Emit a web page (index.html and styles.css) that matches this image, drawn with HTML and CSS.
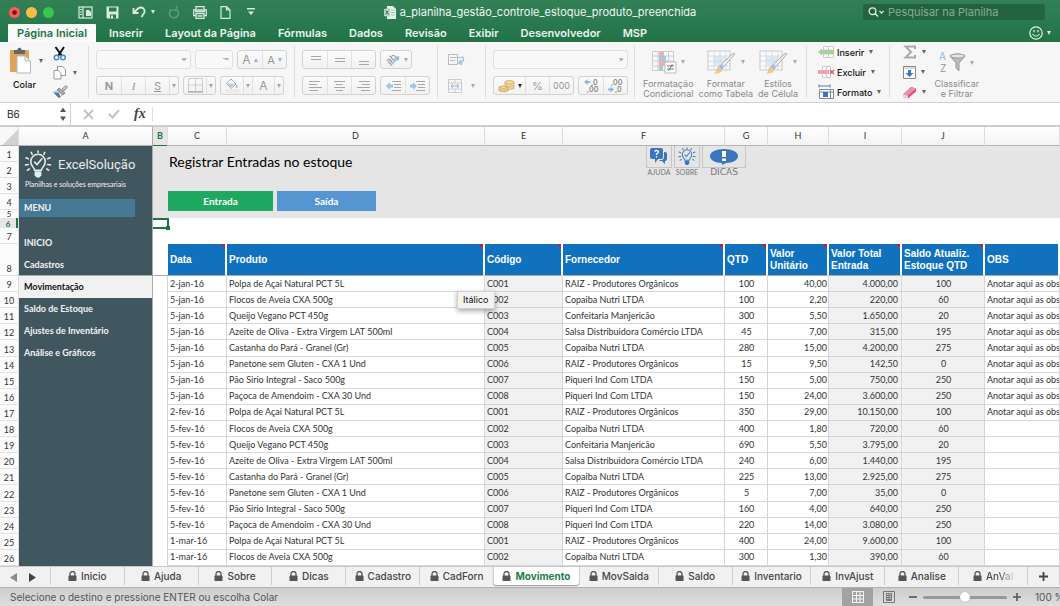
FILE: index.html
```html
<!DOCTYPE html>
<html lang="pt-BR">
<head>
    <meta charset="UTF-8">
    <meta name="viewport" content="width=device-width, initial-scale=1.0">
    <title>a_planilha_gestão_controle_estoque_produto_preenchida</title>
    <link rel="stylesheet" href="styles.css">
</head>
<body>
    <!-- Shared icons -->
    <svg class="sprite" aria-hidden="true">
        <symbol id="lock" viewBox="0 0 9 10"><path d="M2 5V3a2.5 2.5 0 0 1 5 0v2" fill="none" stroke="#555" stroke-width="1.3"/><rect x="0.5" y="4.5" width="8" height="5.5" rx="0.6" fill="#555"/></symbol>
        <symbol id="bulb" viewBox="0 0 28 30"><g fill="none" stroke="currentColor" stroke-width="1.6" stroke-linecap="round"><path d="M10.5 21c0-3-4-4-4-9a7.5 7.5 0 0 1 15 0c0 5-4 6-4 9z"/><path d="M10.5 12.5l2.5 2.5 5-6"/><path d="M14 1v1.500M7 2.500l1 2M21 2.500l-1 2M1.500 8l2.500 1M26.500 8L24 9M1 15.500l3-.5M27 15.500l-3-.5M3 21l2-1.500M25 21l-2-1.500"/></g><path d="M10.5 22h7v4l-2 2.500h-3l-2-2.500z" fill="currentColor"/></symbol>
        <symbol id="brush" viewBox="0 0 30 26"><rect x="1" y="2" width="22" height="19" fill="#fafafa" stroke="#c8c8c8"/><path d="M1 7h22M1 12h22M1 17h22M7 2v19M13 2v19M19 2v19" stroke="#d5dce3"/><path d="M7 7h12v10H7z" fill="#cfe0ef" opacity=".7"/><path d="M27.5 5.5L17 17.5l-2.500-2.500L26 4.500q2-.5 1.500 1z" fill="#f2f2f2" stroke="#aaa"/><path d="M14 15.500l3 3-2 2.500-4-3z" fill="#9dbbe0"/><path d="M11.5 17.5l4 3.500q-2 4-8.500 3.500 2.500-1.500 2-3.500.5-2.500 2.500-3.500z" fill="#edc68f"/></symbol>
    </svg>

    <div class="window">
        <!-- Title Bar -->
        <div class="titlebar">
            <div class="titlebar-left">
                <div class="lights">
                    <button class="light red" aria-label="Fechar"></button>
                    <button class="light yellow" aria-label="Minimizar"></button>
                    <button class="light green" aria-label="Ampliar"></button>
                </div>
                <div class="quick">
                    <button aria-label="Galeria"><svg width="15" height="13" viewBox="0 0 15 13" fill="none" stroke="#d9eadf" stroke-width="1.2"><rect x="1" y="1" width="13" height="11"/><path d="M5 1v11M2 3.500h2M2 6h2M2 8.500h2"/><path d="M8 4h3l2 2v4H8z" fill="#d9eadf" stroke="none"/></svg></button>
                    <button aria-label="Salvar"><svg width="13" height="13" viewBox="0 0 13 13"><path d="M.5.5h12v12H1.500l-1-1z" fill="#d9eadf"/><path d="M3 1.500h7.500v4H3zM4 8.500h6v4H4z" fill="#2c7a50"/><path d="M5 9.500h2v3H5z" fill="#d9eadf"/></svg></button>
                    <button class="with-arrow" aria-label="Desfazer"><svg width="14" height="12" viewBox="0 0 14 12" fill="none" stroke="#d9eadf" stroke-width="1.8"><path d="M1.500 2v5h5M2 6.500l4-4q3-2 5.500 0 2.500 3-.5 6L9.500 11"/></svg><i class="arrow light-arrow"></i></button>
                    <button aria-label="Refazer"><svg width="12" height="13" viewBox="0 0 12 13" fill="none" stroke="#629c7b" stroke-width="1.5"><path d="M8 3.300A4.500 4.500 0 1 1 3.500 3.500M8.500 0v4H4.500"/></svg></button>
                    <button aria-label="Imprimir"><svg width="14" height="13" viewBox="0 0 14 13" fill="none" stroke="#d9eadf" stroke-width="1.3"><path d="M3 4V.7h8V4M3 9.500H.7V4h12.600v5.500H11"/><path d="M3 7.500h8v5H3zM4.500 10h5"/><path d="M2 5.500h10"/></svg></button>
                    <button aria-label="Novo"><svg width="11" height="13" viewBox="0 0 11 13" fill="none" stroke="#d9eadf" stroke-width="1.2"><path d="M1 .7h5.500L10 4v8.300H1zM6.500.7V4H10"/></svg></button>
                    <button class="customize" aria-label="Personalizar"><svg width="8" height="8" viewBox="0 0 8 8" fill="#d9eadf"><path d="M0 0h8v1.500H0zM1 3.500h6L4 7z"/></svg></button>
                </div>
            </div>
            <div class="doc-title">
                <svg width="12" height="13" viewBox="0 0 12 13"><path d="M3 0h6l3 3v10H3z" fill="#e8f2ec"/><path d="M0 3l6-1v9l-6-1z" fill="#b9d6c5"/><path d="M1.500 4.500l3 4M4.500 4.500l-3 4" stroke="#2c7a50"/><path d="M7 4h4M7 6.500h4M7 9h4" stroke="#9dc5ae"/></svg>
                <span>a_planilha_gestão_controle_estoque_produto_preenchida</span>
            </div>
            <div class="titlebar-right">
                <label class="search">
                    <svg width="16" height="10" viewBox="0 0 16 10" fill="none" stroke="#e4efe8" stroke-width="1.3"><circle cx="4.5" cy="4.2" r="3.4"/><path d="M7 6.500l3 3M11.500 4l2 2 2-2"/></svg>
                    <input type="search" placeholder="Pesquisar na Planilha" aria-label="Pesquisar na Planilha">
                </label>
            </div>
        </div>

        <!-- Ribbon Tabs -->
        <div class="ribbon-tabs">
            <button class="active">Página Inicial</button>
            <button>Inserir</button>
            <button>Layout da Página</button>
            <button>Fórmulas</button>
            <button>Dados</button>
            <button>Revisão</button>
            <button>Exibir</button>
            <button>Desenvolvedor</button>
            <button>MSP</button>
            <button class="smile" aria-label="Comentários"><svg width="14" height="14" viewBox="0 0 14 14" fill="none" stroke="#e4efe8" stroke-width="1.2"><circle cx="7" cy="7" r="6.2"/><path d="M3.500 8q3.500 4.500 7 0M5 4v2.200M9 4v2.200"/></svg><i class="arrow light-arrow"></i></button>
        </div>

        <!-- Ribbon -->
        <div class="ribbon">
            <div class="group paste-group">
                <button class="paste">
                    <span class="icon-line"><svg width="21" height="27" viewBox="0 0 21 27"><rect x="0" y="3" width="19" height="22" rx="1" fill="#daa45c"/><path d="M4 3h3q2.500-5 5 0h3v4H4z" fill="#666"/><path d="M7 9h8l5.500 5v12H7z" fill="#fff" stroke="#b5b5b5"/><path d="M15 9v5h5" fill="#eee" stroke="#b5b5b5"/></svg><i class="arrow"></i></span>
                    <span>Colar</span>
                </button>
                <div class="clip">
                    <button aria-label="Recortar"><svg width="14" height="15" viewBox="0 0 14 15" fill="none"><path d="M2.500 1L9 10M11 1L5 10" stroke="#111" stroke-width="2"/><circle cx="3.5" cy="11.5" r="2.3" stroke="#4187d0" stroke-width="1.4"/><circle cx="10" cy="11.5" r="2.3" stroke="#4187d0" stroke-width="1.4"/></svg></button>
                    <button aria-label="Copiar"><svg width="14" height="14" viewBox="0 0 14 14" fill="#fff" stroke="#999"><path d="M4.500.5h5l3 3v6h-8z"/><path d="M1 4.500h4.500l2.500 3V13H1z"/></svg><i class="arrow"></i></button>
                    <button aria-label="Pincel"><svg width="15" height="13" viewBox="0 0 15 13"><path d="M9 4l4-3.500L14.500 2 11 6z" fill="#ccc" stroke="#777" stroke-width=".8"/><path d="M6 3l6 5-2 2-6-5z" fill="#aaa" stroke="#666" stroke-width=".6"/><path d="M4 5.500l5.500 4.500L6 13 .5 7.500z" fill="#eee" stroke="#888" stroke-width=".5"/><path d="M.5 7.500h5l2 4L6 13z" fill="#3f7fc0"/></svg></button>
                </div>
            </div>

            <div class="group">
                <div class="line">
                    <select class="combo font-name" aria-label="Fonte" disabled></select>
                    <select class="combo font-size" aria-label="Tamanho da fonte" disabled></select>
                    <div class="segment"><button class="w24 big-a" disabled>A<i class="arrow up"></i></button><button class="w24" disabled>A<i class="arrow blue"></i></button></div>
                </div>
                <div class="line">
                    <div class="segment"><button class="w24 bold" disabled>N</button><button class="w24 italic" disabled>I</button><button class="w24 under" disabled>S</button><button class="w9" aria-label="Opções de sublinhado" disabled><i class="arrow"></i></button></div>
                    <div class="segment"><button class="w22" aria-label="Bordas" disabled><svg width="15" height="15" viewBox="0 0 15 15" fill="none" stroke="#ccc"><path d="M.5.5h14v13H.5zM7.500.5v13M.5 7h14"/><path d="M0 14h15" stroke="#999"/></svg></button><button class="w9" aria-label="Opções de borda" disabled><i class="arrow"></i></button></div>
                    <div class="segment"><button class="w22" aria-label="Preenchimento" disabled><svg width="15" height="15" viewBox="0 0 15 15" fill="#fff" stroke="#aaa"><path d="M6 1l5 5-5 4.500-4.500-5z"/><path d="M2 5.500h8l-4 4z" fill="#aecbeb" stroke="none"/><path d="M11.500 6q2 3 .5 4-1.500-1-.5-4z" fill="#8bb7e6" stroke="none"/><path d="M1.500 12h12v2h-12z" stroke="#ddd"/></svg></button><button class="w9" aria-label="Cores de preenchimento" disabled><i class="arrow"></i></button><button class="w22 font-color" disabled>A</button><button class="w9" aria-label="Cores da fonte" disabled><i class="arrow"></i></button></div>
                </div>
            </div>

            <div class="group align-group">
                <div class="line">
                    <div class="segment">
                        <button class="w24" aria-label="Alinhar acima" disabled><svg width="13" height="13" stroke="#a8a8a8"><path d="M2 3.500h10M2 6.500h10"/></svg></button>
                        <button class="w24" aria-label="Alinhar no meio" disabled><svg width="13" height="13" stroke="#a8a8a8"><path d="M2 5.500h10M2 8.500h10"/></svg></button>
                        <button class="w24" aria-label="Alinhar abaixo" disabled><svg width="13" height="13" stroke="#a8a8a8"><path d="M2 8.500h10M2 11.500h10"/></svg></button>
                    </div>
                    <div class="segment"><button class="w30" aria-label="Orientação" disabled><svg width="17" height="17" viewBox="0 0 17 17"><text x="2" y="11" transform="rotate(-42 7 8)" font-size="9" fill="#888">ab</text><path d="M6 15l8-8M11 6.500l3.500-.5-.5 3.500" fill="none" stroke="#8bb7e6" stroke-width="1.3"/></svg><i class="arrow"></i></button></div>
                </div>
                <div class="line">
                    <div class="segment">
                        <button class="w24" aria-label="Alinhar à esquerda" disabled><svg width="13" height="13" stroke="#a8a8a8"><path d="M0 2.500h11M0 5.500h8M0 8.500h13M0 11.500h9"/></svg></button>
                        <button class="w24" aria-label="Centralizar" disabled><svg width="13" height="13" stroke="#a8a8a8"><path d="M1 2.500h11M3 5.500h7M1 8.500h11M3 11.500h7"/></svg></button>
                        <button class="w24" aria-label="Alinhar à direita" disabled><svg width="13" height="13" stroke="#a8a8a8"><path d="M2 2.500h11M5 5.500h8M0 8.500h13M4 11.500h9"/></svg></button>
                    </div>
                    <div class="segment">
                        <button class="w24" aria-label="Diminuir recuo" disabled><svg width="15" height="13" stroke="#a8a8a8"><path d="M6 2.500h9M8 5.500h7M8 8.500h7M6 11.500h9"/><path d="M0 7l4-4v2.500h3v3H4V11z" fill="#9cc3ec" stroke="none"/></svg></button>
                        <button class="w24" aria-label="Aumentar recuo" disabled><svg width="15" height="13" stroke="#a8a8a8"><path d="M6 2.500h9M8 5.500h7M8 8.500h7M6 11.500h9"/><path d="M7 7L3 3v2.500H0v3h3V11z" fill="#9cc3ec" stroke="none"/></svg></button>
                    </div>
                </div>
            </div>

            <div class="group wrap-group">
                <div class="line"><button class="plain" aria-label="Quebrar texto" disabled><svg width="17" height="12" viewBox="0 0 17 12" fill="none" stroke="#bbb"><path d="M.5.5h9v10h-9zM2 3.500h11M2 6.500h5"/><path d="M13.500 2.500q3.500 2 1 5l-3 1.500M13 6l-2 3 3 1.500" stroke="#9cc3ec" stroke-width="1.5"/></svg></button></div>
                <div class="line"><button class="plain" aria-label="Mesclar" disabled><svg width="15" height="14" viewBox="0 0 15 14" fill="none" stroke="#ccc"><path d="M.5.5h13v13H.5zM.5 4h13M.5 10h13M7 .5V4M7 10v3.500"/><path d="M3 7h8M5 5L3 7l2 2M9 5l2 2-2 2" stroke="#8bb7e6"/></svg><i class="arrow pale"></i></button></div>
            </div>

            <div class="group number-group">
                <div class="line"><select class="combo number-format" aria-label="Formato de número" disabled></select></div>
                <div class="line">
                    <div class="segment">
                        <button class="w31" aria-label="Moeda"><svg width="17" height="14" viewBox="0 0 17 14" fill="#f1d8a2" stroke="#cfa963" stroke-width=".8"><path d="M7 9.500v-7q4.500-2.500 9 0v7q-4.500 2-9 0z"/><path d="M7 4.500q4.500 2 9 0M7 7q4.500 2 9 0" fill="none"/><path d="M1 12V8q4.500-2.500 9 0v4q-4.500 2-9 0z"/><path d="M1 8.500q4.500 2 9 0M1 10.500q4.500 2 9 0" fill="none"/></svg><i class="arrow dark"></i></button>
                        <button class="w24" disabled>%</button>
                        <button class="w24 zeros" disabled>000</button>
                    </div>
                    <div class="segment">
                        <button class="w24 decimals" aria-label="Aumentar casas decimais" disabled><svg width="17" height="15" viewBox="0 0 17 15"><path d="M1 4l3.500-3v2H7v2H4.500v2z" fill="#8bb7e6"/><text x="8" y="7" font-size="7">,0</text><text x="4" y="14" font-size="7">,00</text></svg></button>
                        <button class="w24 decimals" aria-label="Diminuir casas decimais" disabled><svg width="17" height="15" viewBox="0 0 17 15"><path d="M7 11.500l-3.500-3v2H1v2h2.500v2z" fill="#8bb7e6"/><text x="4" y="7" font-size="7">,00</text><text x="8" y="14" font-size="7">,0</text></svg></button>
                    </div>
                </div>
            </div>

            <div class="group big-group">
                <button class="big" disabled><span class="icon-line"><svg width="26" height="26" viewBox="0 0 26 26"><path d="M1.500 2.500h21v19h-21zM1.500 7h21M1.500 12h21M1.500 17h21M7 2.500v19M17.500 2.500v19" fill="#fafafa" stroke="#ccc"/><path d="M8 3h5v4H8zM8 12h9v5H8z" fill="#f2b0ab"/><path d="M8 7h7v5H8zM8 17h4v4H8z" fill="#a5c6e9"/><path d="M14 13h11v11H14z" fill="#fff" stroke="#bbb"/><path d="M16 17h7M16 20h7M21.500 15l-4 7" stroke="#777"/></svg><i class="arrow pale"></i></span><span>Formatação<br>Condicional</span></button>
                <button class="big" disabled><span class="icon-line"><svg width="30" height="26"><use href="#brush"/></svg><i class="arrow pale"></i></span><span>Formatar<br>como Tabela</span></button>
                <button class="big" disabled><span class="icon-line"><svg width="30" height="26"><use href="#brush"/></svg><i class="arrow pale"></i></span><span>Estilos<br>de Célula</span></button>
            </div>

            <div class="group cells-group">
                <button><svg width="17" height="14" viewBox="0 0 17 14"><path d="M5.500 1.500h10v11h-10zM5.500 5h10M5.500 9h10M10.500 1.500v11" fill="#fff" stroke="#ccc"/><path d="M0 7l4-3.500V5h12v4H4v1.500z" fill="#a5d39d"/></svg>Inserir<i class="arrow"></i></button>
                <button><svg width="17" height="14" viewBox="0 0 17 14"><path d="M4.500 1.500h8v11h-8zM8.500 1.500v11" fill="#fff" stroke="#ccc"/><path d="M0 5h11v4H0z" fill="#efa5a9"/><path d="M12 5l4 4M16 5l-4 4" stroke="#df5d62" stroke-width="1.4"/></svg>Excluir<i class="arrow"></i></button>
                <button><svg width="17" height="16" viewBox="0 0 17 16"><path d="M1 2h11M1 .5v3M12 .5v3" stroke="#4187d0"/><path d="M1.500 5.500h14v9h-14zM1.500 8h14M12.500 5.500v9" fill="#fff" stroke="#888"/><path d="M5 8h5v5H5z" fill="#3279c4"/></svg>Formato<i class="arrow"></i></button>
            </div>

            <div class="group edit-group">
                <div class="edit-column">
                    <button aria-label="AutoSoma"><svg width="14" height="14" viewBox="0 0 14 14" fill="none" stroke="#aaa" stroke-width="2"><path d="M12 4V1.500H2.500L8 7l-5.500 5.500H12V10"/></svg><i class="arrow"></i></button>
                    <button aria-label="Preencher"><svg width="13" height="13" viewBox="0 0 13 13"><path d="M.5.5h12v12H.5z" fill="#fff" stroke="#888"/><path d="M1 1h11v2H1z" fill="#ddd"/><path d="M5 4h3v3h2.500l-4 4-4-4H5z" fill="#3279c4"/></svg><i class="arrow"></i></button>
                    <button aria-label="Limpar"><svg width="15" height="13" viewBox="0 0 15 13"><path d="M1 8.500L9 1l5 1.500v3L6 12.500 1 11z" fill="#d3567a"/><path d="M1 8.500L9 1l5 1.500-8 7z" fill="#e991ab"/><path d="M1 8.500l5 1v3L1 11z" fill="#f6ccd7"/></svg><i class="arrow"></i></button>
                </div>
                <button class="big" disabled><span class="icon-line"><svg width="27" height="25" viewBox="0 0 27 25" font-size="10"><text x="0" y="10" fill="#8bb7e6">A</text><text x="1" y="22" fill="#999">Z</text><path d="M11 6q7.500-4 15 0l-6 7v8l-3-3v-5z" fill="#bbb" stroke="#999"/><ellipse cx="18.5" cy="6" rx="7.500" ry="2" fill="#e5e5e5" stroke="#999"/></svg><i class="arrow pale"></i></span><span>Classificar<br>e Filtrar</span></button>
            </div>
        </div>

        <!-- Formula Bar -->
        <div class="formula-bar">
            <label class="name-box"><input type="text" value="B6" aria-label="Caixa de nome"><svg width="6" height="14" viewBox="0 0 6 14" fill="#555"><path d="M0 5l3-4.500L6 5zM0 9.500h6L3 14z"/></svg></label>
            <button aria-label="Cancelar"><svg width="11" height="11" viewBox="0 0 11 11" stroke="#c2c2c2" stroke-width="1.8"><path d="M1 1l9 9M10 1l-9 9"/></svg></button>
            <button aria-label="Confirmar"><svg width="12" height="10" viewBox="0 0 12 10" fill="none" stroke="#c2c2c2" stroke-width="2"><path d="M1 5l3.500 3.500L11 1"/></svg></button>
            <button class="fx">fx</button>
            <input class="formula" type="text" aria-label="Fórmula">
        </div>

        <!-- Sheet -->
        <div class="sheet">
            <div class="corner"></div>
            <div class="col-a">A</div>
            <div class="col-heads">
                <span class="selected">B</span><span>C</span><span>D</span><span>E</span><span>F</span><span>G</span><span>H</span><span>I</span><span>J</span><span></span>
            </div>

            <div class="rows-top">
                <span>1</span><span>2</span><span>3</span><span>4</span><span class="short">5</span><span class="short selected">6</span><span>7</span><span>8</span>
            </div>
            <div class="rows-data">
                <span>9</span><span>10</span><span>11</span><span>12</span><span>13</span><span>14</span><span>15</span><span>16</span><span>17</span><span>18</span><span>19</span><span>20</span><span>21</span><span>22</span><span>23</span><span>24</span><span>25</span><span>26</span>
            </div>

            <div class="menu">
                <div class="brand">
                    <svg width="28" height="29"><use href="#bulb"/></svg>
                    <span>ExcelSolução</span>
                </div>
                <p class="slogan">Planilhas e soluções empresariais</p>
                <h2>MENU</h2>
                <nav>
                    <a href="#inicio">INICIO</a>
                    <a href="#cadastros" class="frozen">Cadastros</a>
                    <a href="#movimentacao" class="current">Movimentação</a>
                    <a href="#saldo">Saldo de Estoque</a>
                    <a href="#ajustes">Ajustes de Inventário</a>
                    <a href="#analise">Análise e Gráficos</a>
                </nav>
            </div>

            <div class="content">
                <div class="panel">
                    <div class="panel-left">
                        <h1>Registrar Entradas no estoque</h1>
                        <div class="switch">
                            <button class="in">Entrada</button>
                            <button class="out">Saída</button>
                        </div>
                    </div>
                    <div class="helpers">
                        <button><span class="box"><svg width="18" height="17" viewBox="0 0 18 17" fill="#3b76bd"><path d="M2 0h9q2 0 2 2v7q0 2-2 2H8l-3 4v-4H2q-2 0-2-2V2q0-2 2-2z"/><path d="M14 4h1q2 0 2 2v5q0 2-2 2v3l-3-3H9l1-1h2q2-1 2-3z"/><path d="M4.500 3.500q2-2 4 0 0 1.500-2 2.500v1M6.500 8v1.500" stroke="#fff" stroke-width="1.2" fill="none"/></svg></span>AJUDA</button>
                        <button><span class="box"><svg width="20" height="19"><use href="#bulb"/></svg></span>SOBRE</button>
                        <button class="wide"><span class="box"><svg width="28" height="16" viewBox="0 0 28 16"><path d="M14 0c8 0 14 3 14 7s-5 7-12 7l-4 2v-2C5 14 0 11 0 7s6-7 14-7z" fill="#3b76bd"/><path d="M12 2h4v6h-4zM12 9.500h4v2.500h-4z" fill="#fff"/></svg></span>DICAS</button>
                    </div>
                </div>
                <div class="spacer"><div class="active-cell"></div></div>
                <div class="table-wrap">
                    <table>
                        <colgroup>
                            <col class="b"><col class="c"><col class="d"><col class="e"><col class="f"><col class="g"><col class="h"><col class="i"><col class="j"><col>
                        </colgroup>
                        <thead>
                            <tr><td></td><th>Data</th><th>Produto</th><th>Código</th><th>Fornecedor</th><th>QTD</th><th>Valor Unitário</th><th>Valor Total Entrada</th><th>Saldo Atualiz. Estoque QTD</th><th>OBS</th></tr>
                        </thead>
                        <tbody>
                            <tr><td></td><td>2-jan-16</td><td>Polpa de Açai Natural PCT 5L</td><td>C001</td><td>RAIZ - Produtores Orgânicos</td><td>100</td><td>40,00</td><td>4.000,00</td><td>100</td><td>Anotar aqui as observações</td></tr>
                            <tr><td></td><td>5-jan-16</td><td>Flocos de Aveia CXA 500g</td><td>C002</td><td>Copaiba Nutri LTDA</td><td>100</td><td>2,20</td><td>220,00</td><td>60</td><td>Anotar aqui as observações</td></tr>
                            <tr><td></td><td>5-jan-16</td><td>Queijo Vegano PCT 450g</td><td>C003</td><td>Confeitaria Manjericão</td><td>300</td><td>5,50</td><td>1.650,00</td><td>20</td><td>Anotar aqui as observações</td></tr>
                            <tr><td></td><td>5-jan-16</td><td>Azeite de Oliva - Extra Virgem LAT 500ml</td><td>C004</td><td>Salsa Distribuidora Comércio LTDA</td><td>45</td><td>7,00</td><td>315,00</td><td>195</td><td>Anotar aqui as observações</td></tr>
                            <tr><td></td><td>5-jan-16</td><td>Castanha do Pará - Granel (Gr)</td><td>C005</td><td>Copaiba Nutri LTDA</td><td>280</td><td>15,00</td><td>4.200,00</td><td>275</td><td>Anotar aqui as observações</td></tr>
                            <tr><td></td><td>5-jan-16</td><td>Panetone sem Gluten - CXA 1 Und</td><td>C006</td><td>RAIZ - Produtores Orgânicos</td><td>15</td><td>9,50</td><td>142,50</td><td>0</td><td>Anotar aqui as observações</td></tr>
                            <tr><td></td><td>5-jan-16</td><td>Pão Sirio Integral - Saco 500g</td><td>C007</td><td>Piqueri Ind Com LTDA</td><td>150</td><td>5,00</td><td>750,00</td><td>250</td><td>Anotar aqui as observações</td></tr>
                            <tr><td></td><td>5-jan-16</td><td>Paçoca de Amendoim - CXA 30 Und</td><td>C008</td><td>Piqueri Ind Com LTDA</td><td>150</td><td>24,00</td><td>3.600,00</td><td>250</td><td>Anotar aqui as observações</td></tr>
                            <tr><td></td><td>2-fev-16</td><td>Polpa de Açai Natural PCT 5L</td><td>C001</td><td>RAIZ - Produtores Orgânicos</td><td>350</td><td>29,00</td><td>10.150,00</td><td>100</td><td>Anotar aqui as observações</td></tr>
                            <tr><td></td><td>5-fev-16</td><td>Flocos de Aveia CXA 500g</td><td>C002</td><td>Copaiba Nutri LTDA</td><td>400</td><td>1,80</td><td>720,00</td><td>60</td><td></td></tr>
                            <tr><td></td><td>5-fev-16</td><td>Queijo Vegano PCT 450g</td><td>C003</td><td>Confeitaria Manjericão</td><td>690</td><td>5,50</td><td>3.795,00</td><td>20</td><td></td></tr>
                            <tr><td></td><td>5-fev-16</td><td>Azeite de Oliva - Extra Virgem LAT 500ml</td><td>C004</td><td>Salsa Distribuidora Comércio LTDA</td><td>240</td><td>6,00</td><td>1.440,00</td><td>195</td><td></td></tr>
                            <tr><td></td><td>5-fev-16</td><td>Castanha do Pará - Granel (Gr)</td><td>C005</td><td>Copaiba Nutri LTDA</td><td>225</td><td>13,00</td><td>2.925,00</td><td>275</td><td></td></tr>
                            <tr><td></td><td>5-fev-16</td><td>Panetone sem Gluten - CXA 1 Und</td><td>C006</td><td>RAIZ - Produtores Orgânicos</td><td>5</td><td>7,00</td><td>35,00</td><td>0</td><td></td></tr>
                            <tr><td></td><td>5-fev-16</td><td>Pão Sirio Integral - Saco 500g</td><td>C007</td><td>Piqueri Ind Com LTDA</td><td>160</td><td>4,00</td><td>640,00</td><td>250</td><td></td></tr>
                            <tr><td></td><td>5-fev-16</td><td>Paçoca de Amendoim - CXA 30 Und</td><td>C008</td><td>Piqueri Ind Com LTDA</td><td>220</td><td>14,00</td><td>3.080,00</td><td>250</td><td></td></tr>
                            <tr><td></td><td>1-mar-16</td><td>Polpa de Açai Natural PCT 5L</td><td>C001</td><td>RAIZ - Produtores Orgânicos</td><td>400</td><td>24,00</td><td>9.600,00</td><td>100</td><td></td></tr>
                            <tr><td></td><td>1-mar-16</td><td>Flocos de Aveia CXA 500g</td><td>C002</td><td>Copaiba Nutri LTDA</td><td>300</td><td>1,30</td><td>390,00</td><td>60</td><td></td></tr>
                        </tbody>
                    </table>
                    <div class="tooltip">Itálico</div>
                </div>
            </div>
        </div>

        <!-- Sheet Tabs -->
        <div class="sheet-tabs">
            <div class="tab-nav">
                <button aria-label="Anterior"><svg width="7" height="9" viewBox="0 0 7 9"><path d="M7 0v9L0 4.500z" fill="#8a8a8a"/></svg></button>
                <button aria-label="Próxima"><svg width="7" height="9" viewBox="0 0 7 9"><path d="M0 0v9l7-4.500z" fill="#444"/></svg></button>
            </div>
            <button class="tab"><svg><use href="#lock"/></svg>Inicio</button>
            <button class="tab"><svg><use href="#lock"/></svg>Ajuda</button>
            <button class="tab"><svg><use href="#lock"/></svg>Sobre</button>
            <button class="tab"><svg><use href="#lock"/></svg>Dicas</button>
            <button class="tab"><svg><use href="#lock"/></svg>Cadastro</button>
            <button class="tab"><svg><use href="#lock"/></svg>CadForn</button>
            <button class="tab active"><svg><use href="#lock"/></svg>Movimento</button>
            <button class="tab long"><svg><use href="#lock"/></svg>MovSaida</button>
            <button class="tab"><svg><use href="#lock"/></svg>Saldo</button>
            <button class="tab long"><svg><use href="#lock"/></svg>Inventario</button>
            <button class="tab"><svg><use href="#lock"/></svg>InvAjust</button>
            <button class="tab"><svg><use href="#lock"/></svg>Analise</button>
            <button class="tab last"><svg><use href="#lock"/></svg><span>AnVal</span></button>
            <button class="add" aria-label="Nova planilha"><svg width="9" height="9" viewBox="0 0 9 9" stroke="#444" stroke-width="1.8"><path d="M4.500 0v9M0 4.500h9"/></svg></button>
        </div>

        <!-- Status Bar -->
        <div class="status-bar">
            <span class="message">Selecione o destino e pressione ENTER ou escolha Colar</span>
            <button class="view active" aria-label="Normal"><svg width="12" height="12" viewBox="0 0 12 12" fill="none" stroke="#f5f5f5"><path d="M.5.5h11v11H.5zM4.500 0v12M8 0v12M0 4.500h12M0 8h12"/></svg></button>
            <button class="view" aria-label="Layout da página"><svg width="12" height="12" viewBox="0 0 12 12" fill="none" stroke="#777"><path d="M.5.5h11v11H.5zM3.500 2.500h5v7h-5zM4 4.500h4M4 6.500h4M4 8.500h4M6 3v6"/></svg></button>
            <button class="zoom" aria-label="Reduzir"><svg width="8" height="8" stroke="#555" stroke-width="1.6"><path d="M0 4h8"/></svg></button>
            <input type="range" min="0" max="100" value="50" aria-label="Zoom">
            <button class="zoom" aria-label="Ampliar zoom"><svg width="8" height="8" stroke="#555" stroke-width="1.6"><path d="M0 4h8M4 0v8"/></svg></button>
            <span class="percent">100 %</span>
        </div>
    </div>
</body>
</html>
```

FILE: styles.css
```css
* {
    box-sizing: border-box;
}
body, html {
    margin: 0;
    padding: 0;
    height: 100%;
    font-family: Inter, "Liberation Sans", sans-serif;
    font-size: 11px;
    color: #222;
}
button {
    border: none;
    background: none;
    padding: 0;
    margin: 0;
    font: inherit;
    color: inherit;
    display: flex;
    align-items: center;
    justify-content: center;
}
input, select {
    font: inherit;
    color: inherit;
    border: none;
    background: none;
    padding: 0;
    margin: 0;
    outline: none;
    min-width: 0;
}
svg {
    flex: none;
}
.sprite {
    display: none;
}
.window {
    display: flex;
    flex-direction: column;
    height: 100vh;
    overflow: hidden;
}
.arrow {
    border: 2px solid transparent;
    border-top: 4px solid #666;
    border-bottom: none;
    flex: none;
}
.light-arrow {
    border-top-color: #d9eadf;
}
.arrow.pale {
    border-top-color: #aaa;
}

/* Title bar */
.titlebar {
    display: grid;
    grid-template-columns: 1fr auto 1fr;
    align-items: center;
    height: 24px;
    padding: 0 15px 0 9px;
    background: linear-gradient(#338056, #297950);
    color: #f0f7f3;
    flex: none;
}
.titlebar-left, .lights, .quick {
    display: flex;
    align-items: center;
}
.lights {
    gap: 6px;
    width: 69px;
}
.light {
    width: 11px;
    height: 11px;
    border-radius: 50%;
}
.red {
    background: radial-gradient(circle, #7d1612 25%, #fc5b57 35%);
}
.yellow {
    background: #fdbc40;
}
.green {
    background: #34c84a;
}
.quick {
    gap: 13px;
}
.with-arrow {
    gap: 5px;
}
.customize {
    margin-left: 3px;
}
.doc-title {
    display: flex;
    align-items: center;
    gap: 4px;
    margin-left: 26px;
    white-space: nowrap;
}
.titlebar-right {
    display: flex;
    justify-content: flex-end;
}
.search {
    display: flex;
    align-items: center;
    gap: 4px;
    width: 182px;
    height: 16px;
    padding-left: 5px;
    background: #22643f;
    border-radius: 3px;
}
.search input {
    flex: 1;
}
.search input::placeholder {
    color: #86ab95;
    opacity: 1;
}

/* Ribbon tabs */
.ribbon-tabs {
    display: flex;
    height: 18px;
    padding: 0 9px 0 8px;
    background: linear-gradient(#297950, #217346);
    color: #eaf4ee;
    font-weight: 600;
    flex: none;
}
.ribbon-tabs button {
    padding: 0 11px;
}
.ribbon-tabs .active {
    background: #fafafa;
    color: #217346;
    padding: 0 9px;
    margin-right: 2px;
    border-radius: 1px 1px 0 0;
}
.ribbon-tabs .smile {
    margin-left: auto;
    padding: 0;
    gap: 4px;
}

/* Ribbon */
.ribbon {
    display: flex;
    height: 61px;
    padding: 4px 0;
    background: #f6f6f6;
    border-bottom: 1px solid #cfcfcf;
    font-size: 9px;
    flex: none;
}
.group {
    display: flex;
    flex-direction: column;
    gap: 7px;
    padding: 4px 7px 0;
    border-left: 1px solid #dcdcdc;
}
.line {
    display: flex;
    gap: 4px;
    height: 19px;
}
.paste-group {
    flex-direction: row;
    padding: 0 11px 0 10px;
    gap: 10px;
    border: none;
}
.paste {
    flex-direction: column;
    justify-content: flex-start;
    align-items: flex-start;
    gap: 5px;
    padding-top: 1px;
    font-weight: 500;
    color: #111;
}
.paste > span:last-child {
    padding-left: 3px;
}
.icon-line {
    display: flex;
    align-items: center;
    gap: 8px;
}
.clip {
    display: flex;
    flex-direction: column;
    align-items: flex-start;
    gap: 5px;
    width: 24px;
}
.clip button {
    gap: 6px;
}
.combo {
    appearance: none;
    border: 1px solid #e0e0e0;
    border-radius: 3px;
    background-color: #f8f8f8;
    background-image: linear-gradient(45deg, transparent 50%, #b5b5b5 50%), linear-gradient(-45deg, transparent 50%, #b5b5b5 50%);
    background-repeat: no-repeat;
    background-position: right 6px center, right 3px center;
    background-size: 3px 3px;
    opacity: 1;
}
.font-name {
    width: 95px;
}
.font-size {
    width: 38px;
}
.number-format {
    width: 135px;
}
.segment {
    display: flex;
    border: 1px solid #d2d2d2;
    border-radius: 3px;
    background: linear-gradient(#fafafa, #f2f2f2);
}
.segment button {
    font-size: 11px;
    color: #999;
    gap: 3px;
}
.segment button + button {
    border-left: 1px solid #e0e0e0;
}
.segment .arrow {
    border-top-color: #aaa;
}
.segment .arrow.dark {
    border-top-color: #333;
}
.segment .arrow.blue {
    border-top-color: #8bb7e6;
}
.segment .arrow.up {
    border-top: none;
    border-bottom: 4px solid #8bb7e6;
}
.segment .big-a, .segment .font-color {
    font-size: 12px;
}
.w9 {
    width: 9px;
}
.w22 {
    width: 22px;
}
.w24 {
    width: 24px;
}
.w30 {
    width: 30px;
}
.w31 {
    width: 31px;
}
.segment .bold {
    font-weight: 700;
}
.segment .italic {
    font-family: "Liberation Serif", serif;
    font-style: italic;
}
.segment .under {
    text-decoration: underline;
}
.segment .zeros {
    font-size: 9px;
}
.decimals svg {
    font-weight: 600;
    fill: #888;
}
.wrap-group {
    padding: 4px 10px 0;
}
.number-group {
    padding: 4px 6px 0 7px;
}
.plain {
    gap: 8px;
}
.big-group {
    flex-direction: row;
    padding: 3px 8px 0;
    gap: 5px;
}
.big {
    flex-direction: column;
    justify-content: flex-start;
    color: #8a8a8a;
    line-height: 10px;
    gap: 4px;
    white-space: nowrap;
}
.big .icon-line {
    gap: 4px;
}
.cells-group {
    justify-content: center;
    padding: 0 8px 0 11px;
    gap: 0;
}
.cells-group button {
    height: 20px;
    gap: 2px;
    justify-content: flex-start;
    color: #111;
    font-weight: 500;
    flex: none;
}
.cells-group .arrow {
    margin-left: 3px;
}
.edit-group {
    flex-direction: row;
    padding: 0 12px;
    gap: 8px;
}
.edit-column {
    display: flex;
    flex-direction: column;
    justify-content: center;
}
.edit-column button {
    height: 20px;
    gap: 5px;
    flex: none;
}
.edit-group .big {
    padding-top: 4px;
}

/* Formula bar */
.formula-bar {
    display: flex;
    align-items: center;
    gap: 14px;
    height: 24px;
    background: #fff;
    border-bottom: 2px solid #cdcdcd;
    flex: none;
}
.name-box {
    display: flex;
    align-items: center;
    align-self: stretch;
    width: 71px;
    padding: 0 4px 0 7px;
    margin-right: -2px;
    border-right: 1px solid #cfcfcf;
    font-size: 10px;
}
.name-box input {
    flex: 1;
}
.fx {
    font-family: "Liberation Serif", serif;
    font-size: 14px;
    font-style: italic;
    font-weight: 700;
    color: #444;
}
.formula {
    flex: 1;
    height: 14px;
    margin-left: -8px;
    border-left: 1px solid #ddd;
}

/* Sheet */
.sheet {
    display: grid;
    grid-template-columns: 19px 134px 1fr;
    grid-template-rows: 19px 130px 1fr;
    flex: 1;
    min-height: 0;
    background: #fff;
    font-family: Lato, Carlito, sans-serif;
    font-size: 9px;
    color: #333;
}
.corner, .col-a, .col-heads {
    background: linear-gradient(#fefefe, #f3f3f3);
    border-bottom: 1px solid #b5b5b5;
    text-align: center;
    line-height: 18px;
}
.corner {
    background: linear-gradient(135deg, #f8f8f8 58%, #d2d2d2 58%);
    border-right: 1px solid #ddd;
}
.col-a {
    border-right: 1px solid #aaa;
}
.col-heads {
    display: grid;
    grid-template-columns: 15px 59px 258px 78px 162px 43px 61px 73px 83px 1fr;
}
.col-heads span {
    border-right: 1px solid #ddd;
}
.col-heads .selected {
    background: #e6e6e6;
    color: #217346;
    font-weight: 700;
    border-bottom: 2px solid #217346;
}
.rows-top, .rows-data {
    display: grid;
    grid-column: 1;
    background: #fbfbfb;
    border-right: 1px solid #ddd;
}
.rows-top {
    grid-template-rows: 16px 16px 16px 16px 8px 10px 16px 32px;
    border-bottom: 1px solid #aaa;
}
.rows-data {
    grid-row: 3;
    grid-auto-rows: 1fr;
}
.rows-top span, .rows-data span {
    display: flex;
    align-items: flex-end;
    justify-content: center;
    line-height: 12px;
    min-height: 0;
    border-bottom: 1px solid #e2e2e2;
}
.rows-top .short {
    font-size: 8px;
    line-height: 8px;
    border-bottom: none;
}
.rows-top .selected {
    background: #e6e6e6;
    color: #217346;
    font-weight: 700;
    border-right: 2px solid #217346;
}

/* Side menu */
.menu {
    grid-column: 2;
    grid-row: 2 / 4;
    background: #41575f;
    border-right: 1px solid #aaa;
    color: #f3f3f3;
    overflow: hidden;
}
.brand {
    display: flex;
    align-items: center;
    gap: 6px;
    height: 33px;
    padding: 4px 0 0 5px;
    font-family: Roboto, sans-serif;
    font-size: 13px;
    color: #e8ecee;
}
.slogan {
    margin: 0;
    padding-left: 6px;
    font-size: 7px;
    line-height: 10px;
    white-space: nowrap;
}
.menu h2 {
    width: 116px;
    height: 18px;
    margin: 10px 0 15px;
    padding-left: 5px;
    background: #457894;
    font-size: 9px;
    line-height: 18px;
}
.menu nav {
    display: flex;
    flex-direction: column;
}
.menu nav a {
    height: 22px;
    padding-left: 5px;
    color: inherit;
    font-weight: 700;
    line-height: 22px;
    text-decoration: none;
}
.menu nav .frozen {
    border-bottom: 1px solid #aaa;
}
.menu nav .current {
    background: #f1f1f1;
    color: #111;
}

/* Content */
.content {
    grid-column: 3;
    grid-row: 2 / 4;
    display: flex;
    flex-direction: column;
    min-height: 0;
    overflow: hidden;
}
.panel {
    display: flex;
    height: 72px;
    padding-left: 15px;
    background: #e5e5e5;
    flex: none;
}
.panel-left {
    width: 478px;
}
.panel h1 {
    height: 45px;
    margin: 0;
    padding: 6px 0 0 1px;
    font-size: 14px;
    font-weight: 400;
    line-height: 20px;
    color: #000;
}
.switch {
    display: flex;
    gap: 4px;
}
.switch button {
    height: 20px;
    color: #fff;
    font-size: 10px;
    font-weight: 700;
}
.switch .in {
    width: 105px;
    background: #1fa960;
}
.switch .out {
    width: 99px;
    background: #5595d2;
}
.helpers {
    display: flex;
    align-items: flex-start;
    gap: 2px;
}
.helpers button {
    flex-direction: column;
    width: 26px;
    font-size: 7px;
    line-height: 9px;
    color: #777;
}
.helpers .wide {
    width: 44px;
    font-family: "DejaVu Sans", sans-serif;
    font-size: 9px;
}
.box {
    display: flex;
    align-items: center;
    justify-content: center;
    width: 100%;
    height: 22px;
    border: 1px solid #c6c6c6;
    border-top: none;
    color: #3b76bd;
}
.spacer {
    height: 26px;
    flex: none;
}
.active-cell {
    position: relative;
    width: 16px;
    height: 11px;
    border: 2px solid #217346;
    border-left: none;
}
.active-cell::after {
    content: "";
    position: absolute;
    right: -3px;
    bottom: -3px;
    width: 4px;
    height: 4px;
    background: #217346;
}
.table-wrap {
    position: relative;
    flex: 1;
    min-height: 0;
}
table {
    width: 100%;
    height: 100%;
    table-layout: fixed;
    border-collapse: separate;
    border-spacing: 0;
}
.b { width: 15px; }
.c { width: 59px; }
.d { width: 258px; }
.e { width: 78px; }
.f { width: 162px; }
.g { width: 43px; }
.h { width: 61px; }
.i { width: 73px; }
.j { width: 83px; }
thead tr {
    height: 32px;
}
thead td {
    border-bottom: 1px solid #aaa;
}
th {
    position: relative;
    padding: 0 0 0 2px;
    background: #1072bf;
    background-clip: padding-box;
    border-right: 2px solid #fff;
    border-bottom: 1px solid #aaa;
    color: #fff;
    font-family: "Liberation Sans", sans-serif;
    font-size: 10px;
    line-height: 12px;
    text-align: left;
}
th::after {
    content: "";
    position: absolute;
    top: 0;
    right: 0;
    border-top: 4px solid #e8111a;
    border-left: 4px solid transparent;
}
th:last-child::after {
    display: none;
}
tbody td {
    padding: 0 1px 0 2px;
    border-right: 1px solid #d6d6d6;
    border-bottom: 1px solid #d6d6d6;
    line-height: 12px;
    white-space: nowrap;
    overflow: hidden;
}
tbody td:first-child {
    border-bottom: none;
}
tbody td:nth-child(4), tbody td:nth-child(8), tbody td:nth-child(9) {
    background: #f1f1f1;
}
tbody td:nth-child(6), tbody td:nth-child(9) {
    text-align: center;
}
tbody td:nth-child(7), tbody td:nth-child(8) {
    text-align: right;
}
tbody td:nth-child(8) {
    padding-right: 3px;
}
.tooltip {
    position: absolute;
    left: 304px;
    top: 47px;
    padding: 0 5px;
    background: #f3f3f3;
    border: 1px solid #d0d0d0;
    box-shadow: 0 2px 5px rgba(0, 0, 0, 0.35);
    font-family: Inter, sans-serif;
    font-size: 9px;
    line-height: 16px;
    color: #111;
}

/* Sheet tabs */
.sheet-tabs {
    display: flex;
    height: 22px;
    background: #f1f1f1;
    border-top: 1px solid #c8c8c8;
    border-bottom: 1px solid #b0b0b0;
    color: #444;
    font-size: 10px;
    font-weight: 500;
    flex: none;
}
.tab-nav {
    display: flex;
    justify-content: center;
    gap: 12px;
    width: 50px;
    padding-right: 3px;
}
.tab {
    flex: 1 1 74px;
    gap: 4px;
    height: 18px;
    border-left: 1px solid #cfcfcf;
}
.tab svg {
    width: 9px;
    height: 10px;
}
.tab.long {
    flex-basis: 79px;
}
.tab.active {
    flex-basis: 86px;
    background: #fff;
    border-radius: 0 0 3px 3px;
    box-shadow: 0 1px 1px #999;
    color: #1d8048;
    font-weight: 700;
}
.tab.last {
    flex-basis: 69px;
}
.tab.last span {
    background: linear-gradient(90deg, #444 40%, #ccc);
    background-clip: text;
    color: transparent;
}
.add {
    width: 33px;
    height: 18px;
    border-left: 1px solid #cfcfcf;
    border-right: 1px solid #cfcfcf;
}

/* Status bar */
.status-bar {
    display: flex;
    align-items: center;
    height: 18px;
    padding-left: 10px;
    background: linear-gradient(#cdcdcd, #dedede);
    color: #555;
    font-size: 10px;
    flex: none;
}
.message {
    flex: 1;
}
.view {
    width: 31px;
    height: 18px;
}
.view.active {
    background: #a2a2a2;
}
.zoom {
    width: 18px;
}
.status-bar input {
    appearance: none;
    width: 84px;
    height: 3px;
    margin: 0 1px;
    background: #999;
    border-radius: 2px;
}
.status-bar input::-webkit-slider-thumb {
    appearance: none;
    width: 10px;
    height: 10px;
    border-radius: 50%;
    background: #fff;
    box-shadow: 0 0 1px #777;
}
.percent {
    width: 34px;
    padding-left: 9px;
    white-space: nowrap;
}
```
